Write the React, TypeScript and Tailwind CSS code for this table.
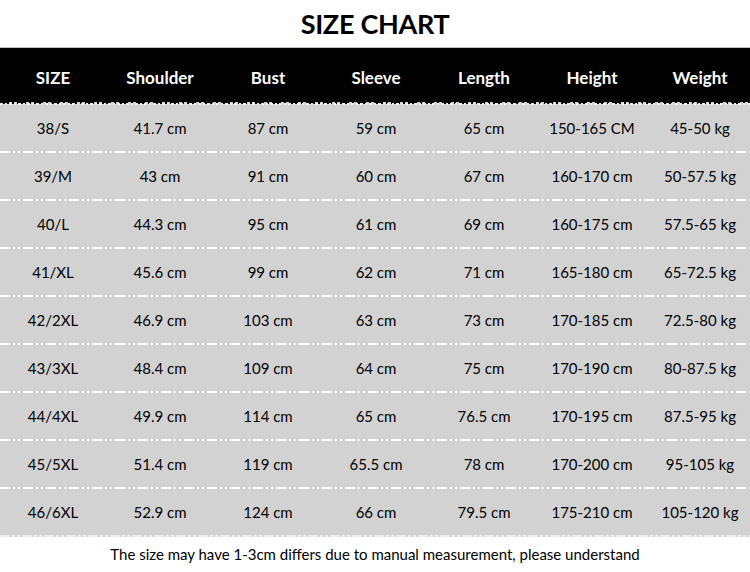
import React from "react";

const headers = ["SIZE", "Shoulder", "Bust", "Sleeve", "Length", "Height", "Weight"];
const rows = [
  ["38/S", "41.7 cm", "87 cm", "59 cm", "65 cm", "150-165 CM", "45-50 kg"],
  ["39/M", "43 cm", "91 cm", "60 cm", "67 cm", "160-170 cm", "50-57.5 kg"],
  ["40/L", "44.3 cm", "95 cm", "61 cm", "69 cm", "160-175 cm", "57.5-65 kg"],
  ["41/XL", "45.6 cm", "99 cm", "62 cm", "71 cm", "165-180 cm", "65-72.5 kg"],
  ["42/2XL", "46.9 cm", "103 cm", "63 cm", "73 cm", "170-185 cm", "72.5-80 kg"],
  ["43/3XL", "48.4 cm", "109 cm", "64 cm", "75 cm", "170-190 cm", "80-87.5 kg"],
  ["44/4XL", "49.9 cm", "114 cm", "65 cm", "76.5 cm", "170-195 cm", "87.5-95 kg"],
  ["45/5XL", "51.4 cm", "119 cm", "65.5 cm", "78 cm", "170-200 cm", "95-105 kg"],
  ["46/6XL", "52.9 cm", "124 cm", "66 cm", "79.5 cm", "175-210 cm", "105-120 kg"],
];

function DashLine({ color, dash, className }: { color: string; dash: string; className?: string }) {
  return (
    <svg className={className} width="750" height="2" viewBox="0 0 750 2" preserveAspectRatio="none">
      <line x1="0" y1="1" x2="750" y2="1" stroke={color} strokeWidth="2" strokeDasharray={dash} />
    </svg>
  );
}

export default function App() {
  const font = { fontFamily: "Lato, 'Open Sans', sans-serif" };
  return (
    <div className="w-[750px] h-[572px] bg-white overflow-hidden flex flex-col" style={font}>
      <div className="h-[47px] flex items-center justify-center">
        <h1 className="text-[27px] font-bold text-black leading-none tracking-[-0.3px]">SIZE CHART</h1>
      </div>
      <div className="h-px bg-[#bdbdbd]" />
      <div className="h-[54px] pt-[5px] bg-black grid grid-cols-[106px_repeat(6,108px)] items-center">
        {headers.map((h) => (
          <div key={h} className="text-center text-white font-bold text-[17px]">{h}</div>
        ))}
      </div>
      <div className="bg-[#d2d2d2] flex flex-col">
        <DashLine color="#000" dash="9 3 2 3" className="block" />
        <DashLine color="#ececec" dash="3 2 2 2" className="block -mt-[1px]" />
        {rows.map((r, i) => (
          <div key={i} className="flex flex-col">
            <div className="h-[46px] grid grid-cols-[106px_repeat(6,108px)] items-center">
              {r.map((c, j) => (
                <div key={j} className="text-center text-black text-[15px]">{c}</div>
              ))}
            </div>
            {i < rows.length - 1 ? (
              <DashLine color="#ffffff" dash="10 3 2 3 2 3" className="block" />
            ) : (
              <DashLine color="#ffffff" dash="10 2 3 2 3 2" className="block opacity-60" />
            )}
          </div>
        ))}
      </div>
      <div className="flex-1 flex items-center justify-center">
        <p className="text-[15px] text-black">The size may have 1-3cm differs due to manual measurement, please understand</p>
      </div>
    </div>
  );
}
